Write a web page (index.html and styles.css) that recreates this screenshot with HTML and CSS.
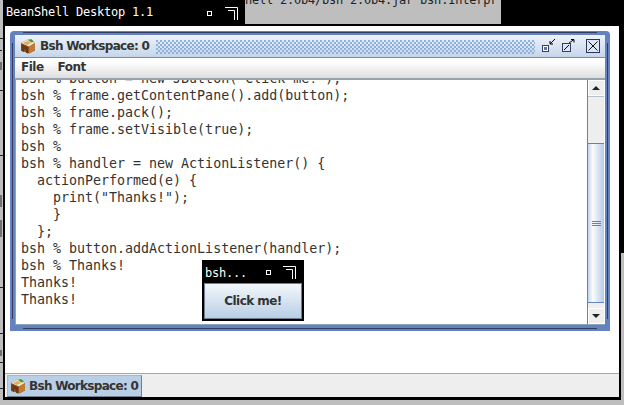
FILE: index.html
```html
<!DOCTYPE html>
<html>
<head>
<meta charset="utf-8">
<title>BeanShell Desktop</title>
<link rel="stylesheet" href="styles.css">
</head>
<body>
<div class="screen">
  <svg class="ticks" width="3" height="405" viewBox="0 0 3 405">
    <path d="M0 38.5h3M0 50.5h2M1 62v8M0 90.5h3M0 155.5h3M1 195v12M1 220v17M0 287.5h3M0 333.5h3M1 350v6M0 362.5h3M0 388.5h3" stroke="#222" fill="none"/>
  </svg>
  <div class="term-text">hell 2.0b4/bsh 2.0b4.jar bsh.Interpr</div>
  <div class="black-right"></div>
  <div class="desktop">
    <div class="canvas"></div>
    <div class="taskbar">
      <div class="task">
        <svg class="bean" width="16" height="16" viewBox="0 0 16 16"><use href="#bean"/></svg>
        <span>Bsh Workspace: 0</span>
      </div>
    </div>
  </div>
  <div class="wm-title">
    <span class="wm-name">BeanShell Desktop 1.1</span>
    <span class="wm-dot"></span>
    <svg class="wm-corner" width="13" height="13" viewBox="0 0 13 13"><path d="M0 .5h12.5V13M3 3.5h6.5V13" stroke="#fff" fill="none"/></svg>
  </div>

  <div class="workspace">
    <div class="titlebar">
      <svg class="bean" width="16" height="16" viewBox="0 0 16 16">
        <g id="bean">
          <path d="M1 5 8 1.5l7 3.5v7.500l-6 3-8-3z" fill="#8a4e1e"/>
          <path d="M1 5 8 1.500 15 5 9 8.500z" fill="#f2e6c6"/>
          <path d="M3 5l5-2 3 2-4 2z" fill="#e2a860"/>
          <path d="M9 8.500 15 5v7.500l-6 3z" fill="#c07a34"/>
          <path d="M1.500 6.500 8 9v6.500l-2-.7V12L4 11v3l-2.500-1z" fill="#6a3a14"/>
          <path d="M8 2l3-1 3 2.500-2.500 1z" fill="#3f9a3a"/>
        </g>
      </svg>
      <span class="title-text">Bsh Workspace: 0</span>
      <div class="dots"></div>
      <svg class="ctrl" width="60" height="16" viewBox="0 0 60 16">
        <rect x="1.500" y="7.500" width="6" height="6" fill="#fff" stroke="#333d6e"/>
        <rect x="3" y="9" width="3" height="3" fill="#5f78a8"/>
        <path d="M9 6l5-5M9 6h3M9 6V3" stroke="#000" fill="none"/>
        <rect x="21.500" y="5.500" width="8" height="8" fill="#dbe6f4" stroke="#333d6e"/>
        <path d="M23 12l5-5" stroke="#000"/>
        <path d="M28 5l5-3.500M33 1.500h-3M33 1.500v3" stroke="#000" fill="none"/>
        <rect x="45.500" y="1.500" width="13" height="13" fill="#dbe6f4" stroke="#2a3358"/>
        <path d="M47.500 3.500l9 9M56.500 3.500l-9 9" stroke="#111" fill="none"/>
      </svg>
    </div>
    <div class="menubar"><span>File</span><span>Font</span></div>
    <div class="body">
      <pre class="console">bsh % button = new JButton("Click me!");
bsh % frame.getContentPane().add(button);
bsh % frame.pack();
bsh % frame.setVisible(true);
bsh %
bsh % handler = new ActionListener() {
  actionPerformed(e) {
    print("Thanks!");
    }
  };
bsh % button.addActionListener(handler);
bsh % Thanks!
Thanks!
Thanks!</pre>
      <div class="scrollbar">
        <div class="arrow up"></div>
        <div class="track-top"></div>
        <div class="thumb"><i></i><i></i><i></i></div>
        <div class="track"></div>
        <div class="arrow down"></div>
      </div>
    </div>
  </div>

  <div class="popup">
    <div class="popup-title">
      <span class="wm-name">bsh...</span>
      <span class="wm-dot"></span>
      <svg class="wm-corner" width="13" height="13" viewBox="0 0 13 13"><path d="M0 .5h12.5V13M3 3.5h6.5V13" stroke="#fff" fill="none"/></svg>
    </div>
    <div class="click">Click me!</div>
  </div>
</div>
</body>
</html>
```
FILE: styles.css
```css
html, body { margin: 0; padding: 0; background: #bebebe; }
.screen { position: relative; width: 624px; height: 405px; overflow: hidden; background: #bebebe; }
.ticks { position: absolute; left: 0; top: 0; }

.term-text { position: absolute; left: 245px; top: -8px; width: 256px; height: 32px; font: 12px/16px "DejaVu Sans Mono", monospace; letter-spacing: -0.22px; color: #222; white-space: pre; }
.black-right { position: absolute; left: 501px; top: 0; width: 123px; height: 253px; background: #000; }

.desktop { position: absolute; left: 3px; top: 24px; width: 618px; height: 376px; box-sizing: border-box; border: 2px solid #000; border-bottom-width: 3px; display: flex; flex-direction: column; background: #fff; }
.canvas { flex: 1; }
.taskbar { height: 24px; flex: none; box-sizing: border-box; background: #eeeeee; border-top: 1px solid #a8a8a8; padding: 1px 0 0 2px; display: flex; }
.task { display: flex; align-items: center; gap: 3px; height: 22px; width: 135px; box-sizing: border-box; padding-left: 2px; background: #b8cfe5; border: 1px solid #6f7f8f; border-top-color: #a3b8cc; border-left-color: #a3b8cc; font: bold 12px "DejaVu Sans", sans-serif; letter-spacing: -0.7px; color: #333; white-space: nowrap; }
.bean { flex: none; }

.wm-title { position: absolute; left: 3px; top: 0; width: 242px; height: 26px; box-sizing: border-box; background: #000; display: flex; align-items: center; padding: 0 7px 2px 3px; }
.wm-name { font: 12px "DejaVu Sans Mono", monospace; letter-spacing: -0.22px; color: #fff; flex: 1; white-space: pre; }
.wm-dot { width: 3px; height: 3px; flex: none; border: 1px solid #fff; margin-right: 13px; margin-top: 3px; }
.wm-corner { flex: none; margin-top: 3px; }

.workspace { position: absolute; left: 10px; top: 31px; width: 600px; height: 300px; box-sizing: border-box; background: #fff; border: 5px solid #6382bf; border-top-width: 4px; border-bottom-width: 6px; border-radius: 4px 4px 0 0; display: flex; flex-direction: column; }
.workspace::before { content: ""; position: absolute; left: 8px; right: 8px; top: -3px; bottom: -4px; border-top: 1px solid #2f3c63; border-bottom: 1px solid #2f3c63; pointer-events: none; }
.workspace::after { content: ""; position: absolute; left: -3px; right: -3px; top: 8px; bottom: 6px; border-left: 1px solid #2f3c63; border-right: 1px solid #2f3c63; pointer-events: none; }
.titlebar { height: 23px; flex: none; box-sizing: border-box; display: flex; align-items: center; gap: 4px; padding: 0 4px 0 5px; background: linear-gradient(#eef3fa, #c5d6ea); border-bottom: 1px solid #7a8aa8; }
.title-text { font: bold 12px "DejaVu Sans", sans-serif; letter-spacing: -0.7px; color: #333; white-space: nowrap; }
.dots { flex: 1; align-self: stretch; margin: 5px 2px 3px 3px; background: radial-gradient(circle at 1px 1px, #8fb0dc 0.8px, transparent 1.1px) 0 0 / 4px 4px, radial-gradient(circle at 1px 1px, #8fb0dc 0.8px, transparent 1.1px) 2px 2px / 4px 4px; }
.ctrl { flex: none; }
.menubar { height: 22px; flex: none; box-sizing: border-box; display: flex; gap: 14px; align-items: center; padding: 0 0 2px 6px; background: linear-gradient(#fff 20%, #dedede); border-bottom: 2px solid #98a3ad; font: bold 12px "DejaVu Sans", sans-serif; letter-spacing: -0.5px; color: #333; }
.body { flex: 1; min-height: 0; display: flex; background: #fff; overflow: hidden; border-left: 1px solid #8fa3b8; border-bottom: 1px solid #8fa3b8; }
.console { flex: 1; margin: -10px 0 0; padding-left: 5px; font: 13.3px/17px "DejaVu Sans Mono", monospace; color: #333; white-space: pre; overflow: hidden; }
.scrollbar { width: 16px; flex: none; display: flex; flex-direction: column; border-left: 1px solid #6382bf; background: #eee; margin-right: 1px; }
.arrow { height: 16px; flex: none; background: #eeeeee; position: relative; border: 1px solid #fff; border-right: 0; box-sizing: border-box; }
.arrow::after { content: ""; position: absolute; left: 3px; top: 5px; border: 4px solid transparent; }
.arrow.up::after { border-bottom: 4px solid #222; border-top: 0; }
.arrow.down::after { border-top: 4px solid #222; border-bottom: 0; }
.track-top { height: 47px; flex: none; background: #eeeeee; border-top: 1px solid #b8c2cc; box-sizing: border-box; }
.track { height: 6px; flex: none; background: #eeeeee; border-top: 1px solid #6382bf; box-sizing: border-box; }
.thumb { flex: 1; background: linear-gradient(90deg, #c3d4ea, #fbfcfe 30%, #b4cbe4); display: flex; flex-direction: column; gap: 1px; align-items: center; justify-content: center; border-top: 1px solid #6382bf; }
.thumb i { display: block; width: 9px; height: 1px; background: #6382bf; }

.popup { position: absolute; left: 202px; top: 260px; width: 102px; height: 61px; box-sizing: border-box; background: #000; border: 2px solid #000; display: flex; flex-direction: column; }
.popup-title { height: 21px; flex: none; display: flex; align-items: center; padding: 0 6px 0 1px; }
.click { flex: 1; display: flex; align-items: center; justify-content: center; background: linear-gradient(#f3f7fb, #b8cfe5); border: 1px solid #6f7f8f; font: bold 12px "DejaVu Sans", sans-serif; letter-spacing: -0.55px; color: #333; }
.popup .wm-dot { margin-right: 12px; margin-top: 0; }
.popup .wm-corner { margin-top: 0; }
```
